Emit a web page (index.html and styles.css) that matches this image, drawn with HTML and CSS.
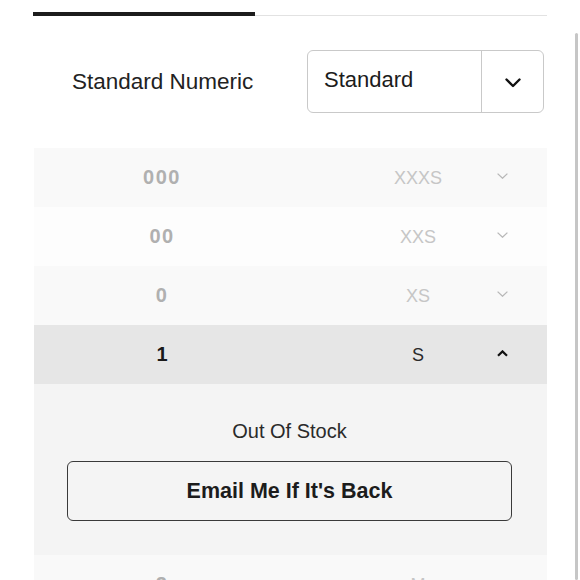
FILE: index.html
```html
<!DOCTYPE html>
<html lang="en">
<head>
<meta charset="utf-8">
<title>Size Chart</title>
<link rel="stylesheet" href="styles.css">
</head>
<body>
<div class="page">
  <div class="tabs"><div class="tab-active"></div></div>

  <div class="system">
    <div class="system-label">Standard Numeric</div>
    <div class="select">
      <div class="select-value">Standard</div>
      <div class="select-btn">
        <svg width="16" height="10" viewBox="0 0 16 10"><path d="M1.5 1.5 L8 8 L14.5 1.5" fill="none" stroke="#111" stroke-width="2.4" stroke-linecap="round" stroke-linejoin="round"/></svg>
      </div>
    </div>
  </div>

  <div class="table">
    <div class="row odd off">
      <div class="num">000</div><div class="size">XXXS</div>
      <div class="chev"><svg width="11" height="6" viewBox="0 0 11 6"><path d="M0.6 0.6 L5.5 5.2 L10.4 0.6" fill="none" stroke="#b8b8b8" stroke-width="1.3"/></svg></div>
    </div>
    <div class="row even off">
      <div class="num">00</div><div class="size">XXS</div>
      <div class="chev"><svg width="11" height="6" viewBox="0 0 11 6"><path d="M0.6 0.6 L5.5 5.2 L10.4 0.6" fill="none" stroke="#b8b8b8" stroke-width="1.3"/></svg></div>
    </div>
    <div class="row odd off">
      <div class="num">0</div><div class="size">XS</div>
      <div class="chev"><svg width="11" height="6" viewBox="0 0 11 6"><path d="M0.6 0.6 L5.5 5.2 L10.4 0.6" fill="none" stroke="#b8b8b8" stroke-width="1.3"/></svg></div>
    </div>
    <div class="row selected">
      <div class="num">1</div><div class="size">S</div>
      <div class="chev"><svg width="11" height="7" viewBox="0 0 11 7"><path d="M1 5.8 L5.5 1.4 L10 5.8" fill="none" stroke="#111" stroke-width="2.2"/></svg></div>
    </div>
    <div class="panel">
      <div class="stock">Out Of Stock</div>
      <button class="notify">Email Me If It's Back</button>
    </div>
    <div class="row odd off">
      <div class="num">2</div><div class="size">M</div>
      <div class="chev"><svg width="11" height="6" viewBox="0 0 11 6"><path d="M0.6 0.6 L5.5 5.2 L10.4 0.6" fill="none" stroke="#b8b8b8" stroke-width="1.3"/></svg></div>
    </div>
  </div>
</div>
<div class="scrollbar"></div>
</body>
</html>
```
FILE: styles.css
```css
html, body {
  margin: 0;
  padding: 0;
  background: #ffffff;
  height: 100%;
  overflow: hidden;
}
body {
  position: relative;
  font-family: "Liberation Sans", Arial, Helvetica, sans-serif;
  color: #222;
}
.page {
  padding: 12px 0 0 33px;
  width: 514px;
}
.tabs {
  height: 4px;
  border-bottom: 1px solid #e2e2e2;
  box-sizing: border-box;
  position: relative;
}
.tab-active {
  width: 222px;
  height: 4px;
  background: #1c1c1c;
}
.system {
  display: flex;
  align-items: center;
  margin-top: 34px;
}
.system-label {
  margin-left: 39px;
  font-size: 22.5px;
  color: #222;
}
.select {
  margin-left: auto;
  margin-right: 3px;
  width: 237px;
  height: 63px;
  box-sizing: border-box;
  border: 1px solid #c9c9c9;
  border-radius: 6px;
  display: flex;
}
.select-value {
  flex: 1;
  padding-left: 16px;
  font-size: 22px;
  line-height: 58px;
  color: #1c1c1c;
}
.select-btn {
  width: 62px;
  border-left: 1px solid #c9c9c9;
  display: flex;
  align-items: center;
  justify-content: center;
  padding-top: 3px;
  box-sizing: border-box;
}
.table {
  margin-top: 35px;
  margin-left: 1px;
  width: 513px;
}
.row {
  display: grid;
  grid-template-columns: 256px 168px 89px;
  height: 59px;
  align-items: center;
}
.row.odd { background: #f9f9f9; }
.row.even { background: #fdfdfd; }
.row.selected { background: #e6e6e6; }
.num {
  text-align: center;
  font-size: 20px;
  font-weight: bold;
}
.off .num {
  color: #b0b0b0;
  letter-spacing: 1.5px;
}
.size {
  justify-self: end;
  width: 80px;
  text-align: center;
  font-size: 18px;
  margin-top: 2px;
}
.off .size { color: #c6c6c6; }
.selected .num { color: #1a1a1a; }
.selected .size { color: #2a2a2a; }
.chev {
  display: flex;
  justify-content: center;
  margin-top: -3px;
}
.selected .chev { margin-top: -2px; }
.panel {
  background: #f4f4f4;
  height: 171px;
  box-sizing: border-box;
  padding: 35px 35px 0 33px;
  display: flex;
  flex-direction: column;
}
.stock {
  text-align: center;
  font-size: 20px;
  line-height: 24px;
  color: #2a2a2a;
}
.notify {
  margin-top: 18px;
  height: 60px;
  width: 445px;
  background: transparent;
  border: 1.5px solid #3a3a3a;
  border-radius: 6px;
  font-family: "Liberation Sans", Arial, Helvetica, sans-serif;
  font-size: 21.5px;
  font-weight: bold;
  color: #1c1c1c;
  padding: 0;
}
.scrollbar {
  position: absolute;
  left: 575px;
  top: 33px;
  width: 3px;
  bottom: 0;
  background: #c6c6c6;
  border-radius: 2px;
}
```
